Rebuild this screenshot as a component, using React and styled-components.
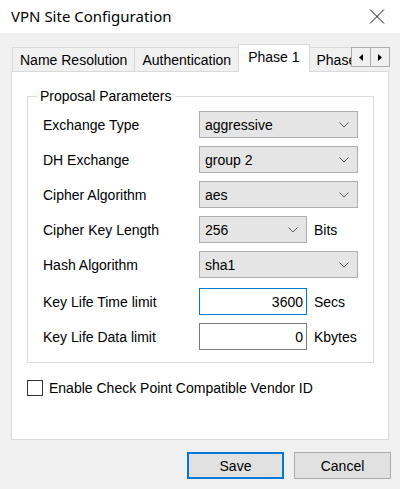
import React from "react";
import styled, { createGlobalStyle } from "styled-components";

const Global = createGlobalStyle`
  html, body { margin: 0; padding: 0; background: #f0f0f0; }
  body { font-family: "Liberation Sans", Arial, sans-serif; font-size: 14px; color: #000; }
  * { box-sizing: border-box; }
`;

const Window = styled.div`
  width: 400px;
  height: 489px;
  display: flex;
  flex-direction: column;
  background: #f0f0f0;
  overflow: hidden;
`;

const TitleBar = styled.div`
  height: 33px;
  background: #fff;
  display: flex;
  align-items: center;
  justify-content: space-between;
  padding: 0 15px 1px 11px;
`;

const Title = styled.div`
  font-family: "Noto Sans", "Open Sans", sans-serif;
  font-size: 15px;
  color: #000;
  line-height: 20px;
`;

const CloseIcon = () => (
  <svg width="16" height="15" viewBox="0 0 16 15">
    <path d="M1 0.5 L15 14.5 M15 0.5 L1 14.5" stroke="#111" strokeWidth="1" fill="none" />
  </svg>
);

const Body = styled.div`
  flex: 1;
  display: flex;
  flex-direction: column;
  padding: 11px 11px 10px 11px;
`;

const TabControl = styled.div`
  display: flex;
  flex-direction: column;
`;

const TabStrip = styled.div`
  height: 28px;
  margin-bottom: -1px;
  display: flex;
  position: relative;
  z-index: 1;
  padding-left: 1px;
`;

const TabList = styled.div`
  flex: 1;
  display: flex;
  align-items: flex-start;
  overflow: hidden;
`;

const Tab = styled.div`
  flex: none;
  white-space: nowrap;
  border: 1px solid #d9d9d9;
  border-bottom: none;
  margin-top: ${(p) => (p.$active ? "0" : "3px")};
  height: ${(p) => (p.$active ? "28px" : "24px")};
  padding: ${(p) => (p.$active ? "0 9px 3px" : "0 7px")};
  background: ${(p) => (p.$active ? "#fff" : "#f0f0f0")};
  display: flex;
  align-items: center;
  line-height: 16px;
  & + & { margin-left: -1px; }
`;

const ScrollButtons = styled.div`
  display: flex;
  margin-top: 3px;
  margin-right: -1px;
  height: 20px;
`;

const ScrollBtn = styled.div`
  width: 20px;
  height: 20px;
  border: 1px solid #adadad;
  background: #f0f0f0;
  display: flex;
  align-items: center;
  justify-content: center;
  & + & { margin-left: -1px; }
`;

const Arrow = ({ dir }) => (
  <svg width="4" height="7" viewBox="0 0 4 7">
    {dir === "left" ? <path d="M4 0 L0 3.5 L4 7 Z" fill="#000" /> : <path d="M0 0 L4 3.5 L0 7 Z" fill="#000" />}
  </svg>
);

const TabPanel = styled.div`
  height: 369px;
  background: #fff;
  border: 1px solid #d9d9d9;
  padding: 16px 14px 0 15px;
  display: flex;
  flex-direction: column;
`;

const Group = styled.fieldset`
  margin: 0;
  padding: 7px 0 12px 15px;
  border: 1px solid #dcdcdc;
  display: flex;
  flex-direction: column;
  gap: 8px;
`;

const Legend = styled.legend`
  margin-left: -6px;
  padding: 0 3px;
  line-height: 16px;
  font-size: 14px;
`;

const Row = styled.div`
  display: flex;
  align-items: center;
  height: 27px;
  margin-top: ${(p) => (p.$spaced ? "2px" : "0")};
`;

const Label = styled.div`
  width: 156px;
  flex: none;
`;

const Combo = styled.div`
  width: ${(p) => p.$w}px;
  height: 27px;
  background: #e5e5e5;
  border: 1px solid #adadad;
  display: flex;
  align-items: center;
  justify-content: space-between;
  padding: 0 8px 0 5px;
`;

const Chevron = () => (
  <svg width="10" height="6" viewBox="0 0 10 6">
    <path d="M0.5 0.5 L5 5 L9.5 0.5" stroke="#5a5a5a" strokeWidth="1" fill="none" />
  </svg>
);

const TextBox = styled.div`
  width: 108px;
  height: 27px;
  background: #fff;
  border: 1px solid ${(p) => (p.$focused ? "#0078d7" : "#7a7a7a")};
  display: flex;
  align-items: center;
  justify-content: flex-end;
  padding-right: 3px;
`;

const Unit = styled.div`
  margin-left: 7px;
`;

const CheckRow = styled.div`
  display: flex;
  align-items: center;
  margin-top: 17px;
  gap: 6px;
`;

const CheckBox = styled.div`
  width: 16px;
  height: 16px;
  border: 1px solid #333;
  background: #fff;
`;

const ButtonRow = styled.div`
  display: flex;
  justify-content: flex-end;
  gap: 10px;
  margin-top: 12px;
  margin-right: -2px;
`;

const Button = styled.div`
  width: 97px;
  height: 27px;
  background: #e1e1e1;
  border: ${(p) => (p.$default ? "2px solid #0078d7" : "1px solid #adadad")};
  display: flex;
  align-items: center;
  justify-content: center;
`;

const combos = [
  { label: "Exchange Type", value: "aggressive", w: 159 },
  { label: "DH Exchange", value: "group 2", w: 159 },
  { label: "Cipher Algorithm", value: "aes", w: 159 },
  { label: "Cipher Key Length", value: "256", w: 108, unit: "Bits" },
  { label: "Hash Algorithm", value: "sha1", w: 159 },
];

const texts = [
  { label: "Key Life Time limit", value: "3600", unit: "Secs", focused: true },
  { label: "Key Life Data limit", value: "0", unit: "Kbytes" },
];

export default function App() {
  return (
    <>
      <Global />
      <Window>
        <TitleBar>
          <Title>VPN Site Configuration</Title>
          <CloseIcon />
        </TitleBar>
        <Body>
          <TabControl>
            <TabStrip>
              <TabList>
                <Tab>Name Resolution</Tab>
                <Tab>Authentication</Tab>
                <Tab $active>Phase 1</Tab>
                <Tab>Phase 2</Tab>
              </TabList>
              <ScrollButtons>
                <ScrollBtn><Arrow dir="left" /></ScrollBtn>
                <ScrollBtn><Arrow dir="right" /></ScrollBtn>
              </ScrollButtons>
            </TabStrip>
            <TabPanel>
              <Group>
                <Legend>Proposal Parameters</Legend>
                {combos.map((c) => (
                  <Row key={c.label}>
                    <Label>{c.label}</Label>
                    <Combo $w={c.w}>
                      <span>{c.value}</span>
                      <Chevron />
                    </Combo>
                    {c.unit && <Unit>{c.unit}</Unit>}
                  </Row>
                ))}
                {texts.map((t, i) => (
                  <Row key={t.label} $spaced={i === 0}>
                    <Label>{t.label}</Label>
                    <TextBox $focused={t.focused}>{t.value}</TextBox>
                    <Unit>{t.unit}</Unit>
                  </Row>
                ))}
              </Group>
              <CheckRow>
                <CheckBox />
                <span>Enable Check Point Compatible Vendor ID</span>
              </CheckRow>
            </TabPanel>
          </TabControl>
          <ButtonRow>
            <Button $default>Save</Button>
            <Button>Cancel</Button>
          </ButtonRow>
        </Body>
      </Window>
    </>
  );
}
